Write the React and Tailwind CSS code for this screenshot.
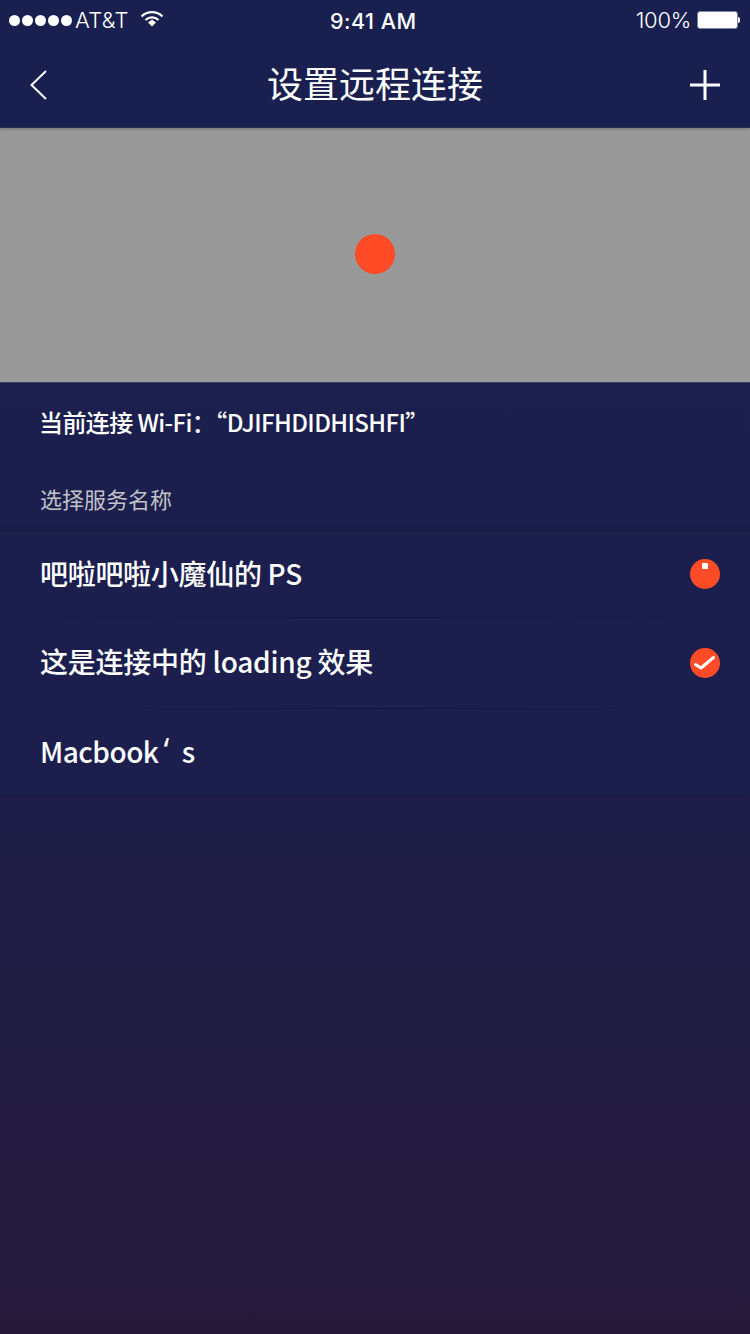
const CJK = { fontFamily: '"Noto Sans CJK SC", "Open Sans", sans-serif' };

function Wifi() {
  return (
    <svg width="24" height="17" viewBox="0 0 24 17" className="ml-[11px] -mt-[3px]">
      <path d="M1.5 6.5 A15 15 0 0 1 22.5 6.5" fill="none" stroke="#fff" strokeWidth="2.2" />
      <path d="M5.5 10 A9.5 9.5 0 0 1 18.5 10" fill="none" stroke="#fff" strokeWidth="2.2" />
      <path d="M8 12.6 L12 9.6 L16 12.6 L12 16.5 Z" fill="#fff" />
    </svg>
  );
}

function Divider({ className }) {
  return <div className={`h-px bg-gradient-to-r from-transparent via-[#101236] to-transparent ${className}`} />;
}

export default function App() {
  return (
    <div className="w-[750px] h-[1334px] flex flex-col overflow-hidden bg-gradient-to-b from-[#1a2050] via-[#1d1f4c] to-[#251a3a]" style={CJK}>
      <header className="relative z-10 h-[128px] shrink-0 bg-[#192050] border-b border-[#2b2f4a] shadow-[0_1px_3px_rgba(0,0,0,0.25)] flex flex-col">
        <div className="h-[40px] flex items-center justify-between pl-[9px] pr-[10px] text-white text-[21px] relative" style={{ fontFamily: '"Inter", "Liberation Sans", sans-serif' }}>
          <div className="flex items-center">
            <div className="flex gap-[2px]">
              {[0, 1, 2, 3, 4].map((i) => <span key={i} className="w-[11px] h-[11px] rounded-full bg-white" />)}
            </div>
            <span className="ml-[3px] font-light text-[22px] tracking-[0.3px]">AT&amp;T</span>
            <Wifi />
          </div>
          <span className="absolute left-[330px] top-[5px] font-medium text-[21.5px] tracking-[0.5px]">9:41 AM</span>
          <div className="flex items-center">
            <span className="font-light text-[22px] tracking-[-0.3px]">100%</span>
            <div className="ml-[6px] w-[41px] h-[18px] rounded-[3px] bg-white border border-[#7d83a8]" />
            <div className="w-[2px] h-[6px] bg-white rounded-r-sm" />
          </div>
        </div>
        <div className="flex-1 grid grid-cols-[1fr_auto_1fr] items-center pl-[30px] pr-[30px] pt-[3px]">
          <svg width="18" height="30" viewBox="0 0 18 30" fill="none" stroke="#fff" strokeWidth="2">
            <path d="M16 1 L1.5 15 L16 29" />
          </svg>
          <h1 className="mb-[7px] text-white text-[36px] leading-[44px] font-normal">设置远程连接</h1>
          <svg width="30" height="30" viewBox="0 0 30 30" stroke="#fff" strokeWidth="3" className="justify-self-end">
            <path d="M0 15 H30 M15 0 V30" />
          </svg>
        </div>
      </header>

      <section className="h-[254px] shrink-0 bg-[#999999] flex items-center justify-center pb-[2px]">
        <div className="w-[40px] h-[40px] rounded-full bg-[#ff4b26]" />
      </section>

      <div className="h-[148px] shrink-0 border-t border-[#3a3f5e] pl-[39px] flex flex-col">
        <p className="mt-[22px] text-white text-[24px] leading-[34px] font-medium tracking-[-0.6px]">当前连接 Wi-Fi：“DJIFHDIDHISHFI”</p>
        <p className="mt-[43px] pl-[1px] text-[#c2c2c8] text-[22px] leading-[32px]">选择服务名称</p>
      </div>

      <ul className="shrink-0 border-t border-[#171b42] border-b border-b-[#181a3e] bg-[#1c1f4e] shadow-[0_0_4px_rgba(0,0,0,0.25)]">
        <li className="h-[86px] pl-[40px] pr-[30px] flex items-center justify-between">
          <span className="mb-[2px] text-white text-[28px] leading-[36px] font-medium tracking-[-0.3px]">吧啦吧啦小魔仙的 PS</span>
          <div className="relative w-[30px] h-[30px] rounded-full bg-[#ff4b26]">
            <span className="absolute left-[12px] top-[4px] w-[6px] h-[6px] bg-white rounded-[1px]" />
          </div>
        </li>
        <Divider className="mr-[20px]" />
        <li className="h-[90px] pl-[40px] pr-[30px] flex items-center justify-between">
          <span className="mb-[4px] text-white text-[28px] leading-[36px] font-medium tracking-[-0.25px]">这是连接中的 loading 效果</span>
          <svg width="30" height="30" viewBox="0 0 30 30" className="block">
            <circle cx="15" cy="15" r="15" fill="#ff4b26" />
            <path d="M5.5 16.5 L11 20 L23.5 9.5" fill="none" stroke="#fff" strokeWidth="3" strokeLinecap="round" strokeLinejoin="round" />
          </svg>
        </li>
        <Divider className="ml-[60px] mr-[50px]" />
        <li className="h-[85px] pl-[40px] flex items-center">
          <span className="mb-[2px] text-white text-[28px] leading-[36px] font-medium tracking-[-0.5px]">
            Macbook<span className="ml-[5px] mr-[13px] text-[34px] leading-none font-['Open_Sans']">‘</span>s
          </span>
        </li>
      </ul>
    </div>
  );
}
